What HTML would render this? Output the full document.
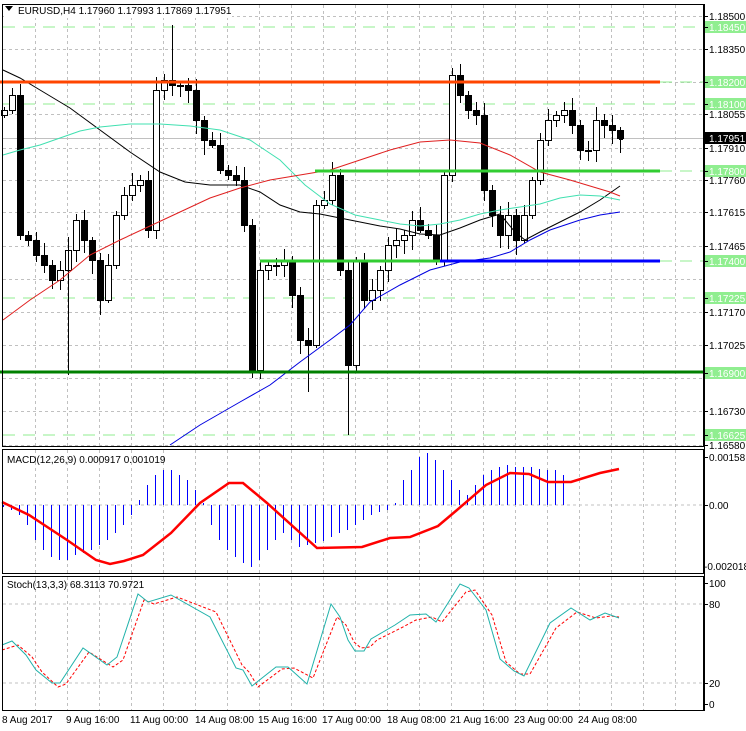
<!DOCTYPE html>
<html><head><meta charset="utf-8"><style>
body{margin:0;background:#fff;width:746px;height:731px;overflow:hidden;font-family:"Liberation Sans",sans-serif}
svg{display:block}
text{font-family:"Liberation Sans",sans-serif;font-size:10px}
</style></head><body>
<svg id="s" width="746" height="731" viewBox="0 0 746 731" xmlns="http://www.w3.org/2000/svg">
<rect width="746" height="731" fill="#fff"/>
<g id="grid" stroke="#c0c0c0" stroke-dasharray="3,3" stroke-width="1"></g>
<g id="hlines">
<line x1="3" y1="27" x2="703" y2="27" stroke="#90ee90" stroke-dasharray="12,8"/>
<line x1="3" y1="104" x2="703" y2="104" stroke="#90ee90" stroke-dasharray="12,8"/>
<line x1="3" y1="298" x2="703" y2="298" stroke="#90ee90" stroke-dasharray="12,8"/>
<line x1="3" y1="435" x2="703" y2="435" stroke="#90ee90" stroke-dasharray="12,8"/>
<line x1="660" y1="82" x2="703" y2="82" stroke="#90ee90" stroke-dasharray="12,8"/>
<line x1="660" y1="171" x2="703" y2="171" stroke="#90ee90" stroke-dasharray="12,8"/>
<line x1="3" y1="138.5" x2="703" y2="138.5" stroke="#c0c0c0"/>
</g>
<g id="candles"></g>
<polyline fill="none" stroke="#000" stroke-width="1" points="3,70 20,78 40,90 70,108 100,130 130,152 160,172 185,182 210,185 240,185 260,192 280,205 300,212 320,214 340,218 360,222 380,226 400,229 420,234 440,235 460,228 480,220 500,214 515,232 525,240 540,232 560,222 580,212 600,200 620,186"/>
<polyline fill="none" stroke="#40e0b0" stroke-width="1" points="3,155 20,150 40,145 60,138 80,131 100,127 130,124 160,124 190,126 220,130 250,140 280,160 305,185 330,204 355,215 380,220 400,224 420,226 440,224 460,220 480,214 500,210 520,207 540,204 560,198 580,195 600,196 620,200"/>
<polyline fill="none" stroke="#e02020" stroke-width="1" points="3,320 30,300 60,280 90,255 120,240 150,226 180,212 210,198 240,188 270,180 300,175 330,170 360,160 390,150 420,142 450,140 480,143 510,155 540,172 570,180 590,186 610,192 620,196"/>
<polyline fill="none" stroke="#0000e0" stroke-width="1" points="170,445 200,425 240,402 270,385 300,362 330,340 350,325 370,302 400,285 430,270 460,262 490,258 510,252 530,240 550,230 580,220 600,215 620,212"/>
<line x1="0" y1="82" x2="660" y2="82" stroke="#ff4500" stroke-width="3"/>
<line x1="315" y1="171" x2="660" y2="171" stroke="#32cd32" stroke-width="3"/>
<line x1="260" y1="261" x2="440" y2="261" stroke="#32cd32" stroke-width="3"/>
<line x1="440" y1="261" x2="660" y2="261" stroke="#0000ff" stroke-width="3"/>
<line x1="660" y1="261" x2="703" y2="261" stroke="#90ee90" stroke-dasharray="12,8"/>
<line x1="0" y1="372" x2="703" y2="372" stroke="#008000" stroke-width="3"/>
<rect x="4" y="4" width="228" height="14" fill="#fff"/>
<polygon points="5,6 13,6 9,11" fill="#000"/>
<text x="18" y="14" font-size="11" fill="#000">EURUSD,H4  1.17960 1.17993 1.17869 1.17951</text>

<line x1="3" y1="505" x2="703" y2="505" stroke="#c0c0c0" stroke-dasharray="3,3"/>
<g id="macd" stroke="#0000ff" stroke-width="1"></g>
<polyline fill="none" stroke="#ff0000" stroke-width="2.5" points="2,502 29,515 67,540 96,560 110,564 124,561 143,555 171,533 200,503 229,483 243,483 267,503 317,548 362,547 390,538 410,537 438,526 457,510 486,485 510,473 529,474 548,482 571,482 600,473 619,469"/>
<text x="7" y="463" fill="#000">MACD(12,26,9) 0.000917 0.001019</text>

<line x1="3" y1="604" x2="703" y2="604" stroke="#c0c0c0" stroke-dasharray="3,3"/>
<line x1="3" y1="683" x2="703" y2="683" stroke="#c0c0c0" stroke-dasharray="3,3"/>
<polyline fill="none" stroke="#ff0000" stroke-width="1" stroke-dasharray="3,2" points="2,650 18,645 32,657 42,672 58,687 66,684 89,652 113,667 123,660 144,600 154,604 177,597 216,612 242,665 249,672 258,687 282,669 294,668 313,678 337,617 346,625 354,642 361,648 370,647 377,640 401,628 416,620 432,617 442,622 466,592 475,590 492,615 506,662 520,674 530,674 556,628 577,612 596,618 611,616 619,617"/>
<polyline fill="none" stroke="#20b2aa" stroke-width="1" points="2,645 12,641 26,655 36,670 52,683 60,683 83,648 107,665 117,657 138,594 148,602 171,595 210,617 236,668 243,670 252,686 276,667 288,667 307,684 331,604 340,617 348,640 355,651 364,651 371,639 395,625 410,615 426,614 436,622 460,584 469,588 486,610 500,659 514,671 524,676 550,623 571,608 590,620 605,613 619,618"/>
<text x="7" y="588" fill="#000">Stoch(13,3,3) 68.3113 70.9721</text>

<rect x="2.5" y="4.5" width="701" height="442" fill="none" stroke="#000"/>
<rect x="2.5" y="449.5" width="701" height="124" fill="none" stroke="#000"/>
<rect x="2.5" y="576.5" width="701" height="134" fill="none" stroke="#000"/>

<g id="axis"></g>
<g font-size="10" fill="#000">
<text x="2" y="723">8 Aug 2017</text>
<text x="66" y="723">9 Aug 16:00</text>
<text x="130" y="723">11 Aug 00:00</text>
<text x="195" y="723">14 Aug 08:00</text>
<text x="258" y="723">15 Aug 16:00</text>
<text x="322" y="723">17 Aug 00:00</text>
<text x="387" y="723">18 Aug 08:00</text>
<text x="450" y="723">21 Aug 16:00</text>
<text x="514" y="723">23 Aug 00:00</text>
<text x="578" y="723">24 Aug 08:00</text>
</g>
</svg>
<script>
(function(){
var NS="http://www.w3.org/2000/svg";
function el(p,t,a,txt){var e=document.createElementNS(NS,t);for(var k in a)e.setAttribute(k,a[k]);if(txt)e.textContent=txt;p.appendChild(e);return e;}
var g=document.getElementById('grid');
for(var x=35;x<703;x+=32){el(g,'line',{x1:x+.5,y1:5,x2:x+.5,y2:446});el(g,'line',{x1:x+.5,y1:450,x2:x+.5,y2:573});el(g,'line',{x1:x+.5,y1:577,x2:x+.5,y2:710});}
[16,49,82,114,148,180,212,246,279,312,345,378,411,445].forEach(function(y){el(g,'line',{x1:3,y1:y+.5,x2:703,y2:y+.5});});
var c=[110,95,235,240,255,265,280,270,250,220,240,260,300,265,215,195,185,180,230,90,80,85,85,90,120,140,145,170,175,180,225,370,270,265,265,260,295,340,345,205,200,175,270,365,260,300,290,270,245,240,235,220,230,235,260,175,75,95,110,115,190,215,235,215,240,215,180,140,120,115,110,125,150,150,120,125,130,138];
var cg=document.getElementById('candles');
var prev=115;
for(var i=0;i<c.length;i++){var cx=4+8*i,o=prev,cl=c[i];var tp=Math.min(o,cl),bt=Math.max(o,cl);
var w1=(i*37%11)+3,w2=(i*53%13)+3;
el(cg,'line',{x1:cx+.5,y1:tp-w1,x2:cx+.5,y2:bt+w2,stroke:'#000'});
var h=Math.max(bt-tp,1);
el(cg,'rect',{x:cx-2.5,y:tp+.5,width:6,height:h,fill:cl<o?'#fff':'#000',stroke:'#000'});
prev=cl;}
[[172,25,80],[68,250,375],[348,370,435],[308,340,392],[460,65,100]].forEach(function(w){el(cg,'line',{x1:w[0]+.5,y1:w[1],x2:w[0]+.5,y2:w[2],stroke:'#000'});});
el(cg,'rect',{x:619,y:136,width:4,height:4,fill:'#000'});
var m=[-2,-5,-10,-20,-35,-45,-52,-55,-55,-50,-48,-45,-40,-35,-28,-20,-10,5,20,30,35,35,30,25,15,2,-20,-35,-45,-52,-58,-62,-55,-45,-35,-28,-35,-42,-40,-38,-36,-32,-28,-25,-20,-15,-10,-7,-5,2,25,35,48,52,45,35,25,15,10,20,30,35,38,40,38,38,38,36,35,35,30];
var mg=document.getElementById('macd');
for(var i=0;i<m.length;i++){var mx=3+8*i+.5;el(mg,'line',{x1:mx,y1:505,x2:mx,y2:505-m[i]});}
var ax=document.getElementById('axis');
el(ax,'line',{x1:704.5,y1:4,x2:704.5,y2:711,stroke:'#000'});
function lab(y,t,bg,fg){if(bg)el(ax,'rect',{x:705,y:y-6,width:41,height:12,fill:bg});el(ax,'line',{x1:704,y1:y+.5,x2:708,y2:y+.5,stroke:'#000'});el(ax,'text',{x:709,y:y+4,fill:fg||'#000'},t);}
lab(16,'1.18500');lab(49,'1.18350');lab(114,'1.18055');lab(148,'1.17910');lab(180,'1.17760');lab(212,'1.17615');lab(246,'1.17465');lab(312,'1.17170');lab(345,'1.17025');lab(411,'1.16730');lab(445,'1.16580');
lab(27,'1.18450','#90ee90','#fff');lab(82,'1.18200','#90ee90','#fff');lab(104,'1.18100','#90ee90','#fff');lab(171,'1.17800','#90ee90','#fff');lab(261,'1.17400','#90ee90','#fff');lab(298,'1.17225','#90ee90','#fff');lab(373,'1.16900','#90ee90','#fff');lab(435,'1.16625','#90ee90','#fff');
lab(138,'1.17951','#000','#fff');
lab(457,'0.00158');lab(505,'0.00');el(ax,'text',{x:704,y:570,fill:'#000','font-size':'9'},'-0.002018');
lab(583,'100');lab(604,'80');lab(683,'20');lab(704,'0');
})();
</script>
</body></html>
